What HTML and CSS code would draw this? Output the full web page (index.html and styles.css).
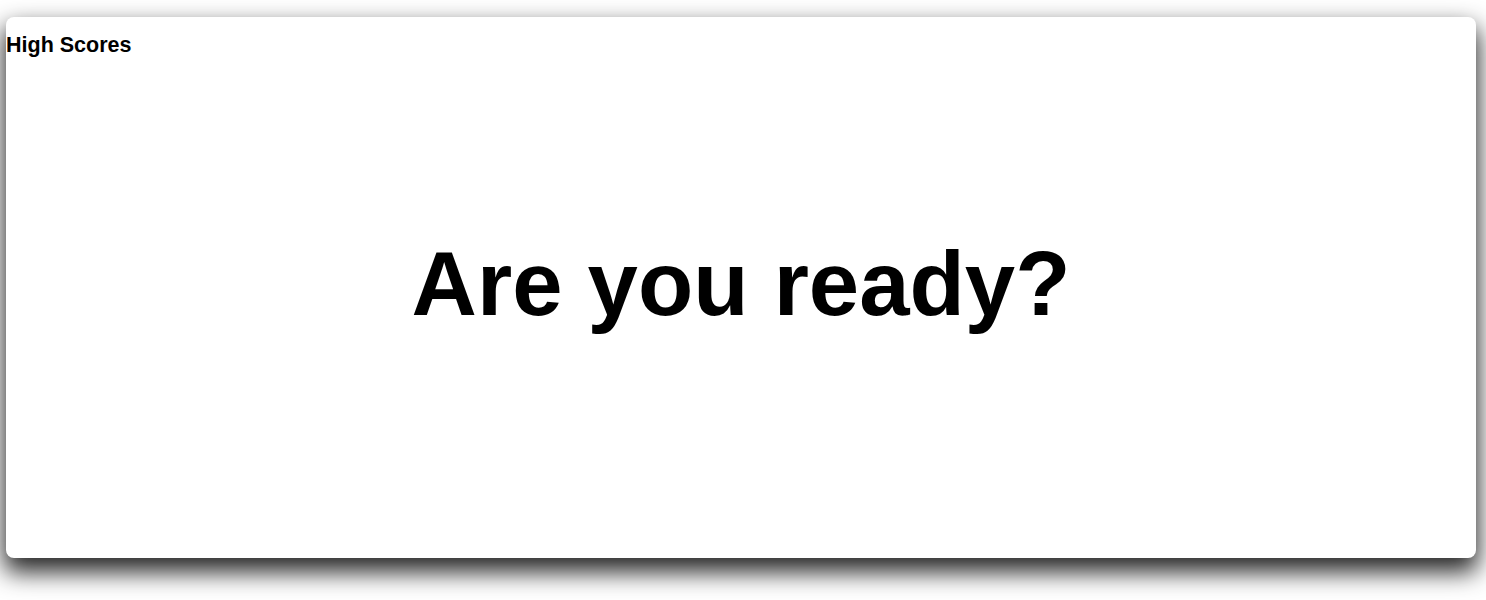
FILE: index.html
```html
<!DOCTYPE html>
<html>
<head>
<meta charset="utf-8">
<link rel="stylesheet" href="styles.css">
</head>
<body>
<div class="card">
  <h3 class="scores">High Scores</h3>
  <h1 class="ready">Are you ready?</h1>
</div>
</body>
</html>
```
FILE: styles.css
```css
html, body {
  margin: 0;
  background: #ffffff;
}
body {
  padding: 17px 10px 42px 6px;
  font-family: "Liberation Sans", Arial, sans-serif;
}
.card {
  width: 1470px;
  height: 541px;
  background: #ffffff;
  border-radius: 8px;
  box-shadow: 0 12px 24px 2px rgba(0, 0, 0, 0.85);
  display: grid;
  grid-template: 1fr / 1fr;
}
.scores {
  grid-area: 1 / 1;
  align-self: start;
  justify-self: start;
  margin: 16px 0 0 0;
  font-size: 21.5px;
  font-weight: bold;
  line-height: 24px;
  color: #000;
}
.ready {
  grid-area: 1 / 1;
  align-self: center;
  justify-self: center;
  margin: 0 0 7px 0;
  font-size: 90.5px;
  font-weight: bold;
  line-height: 104px;
  color: #000;
}
```
